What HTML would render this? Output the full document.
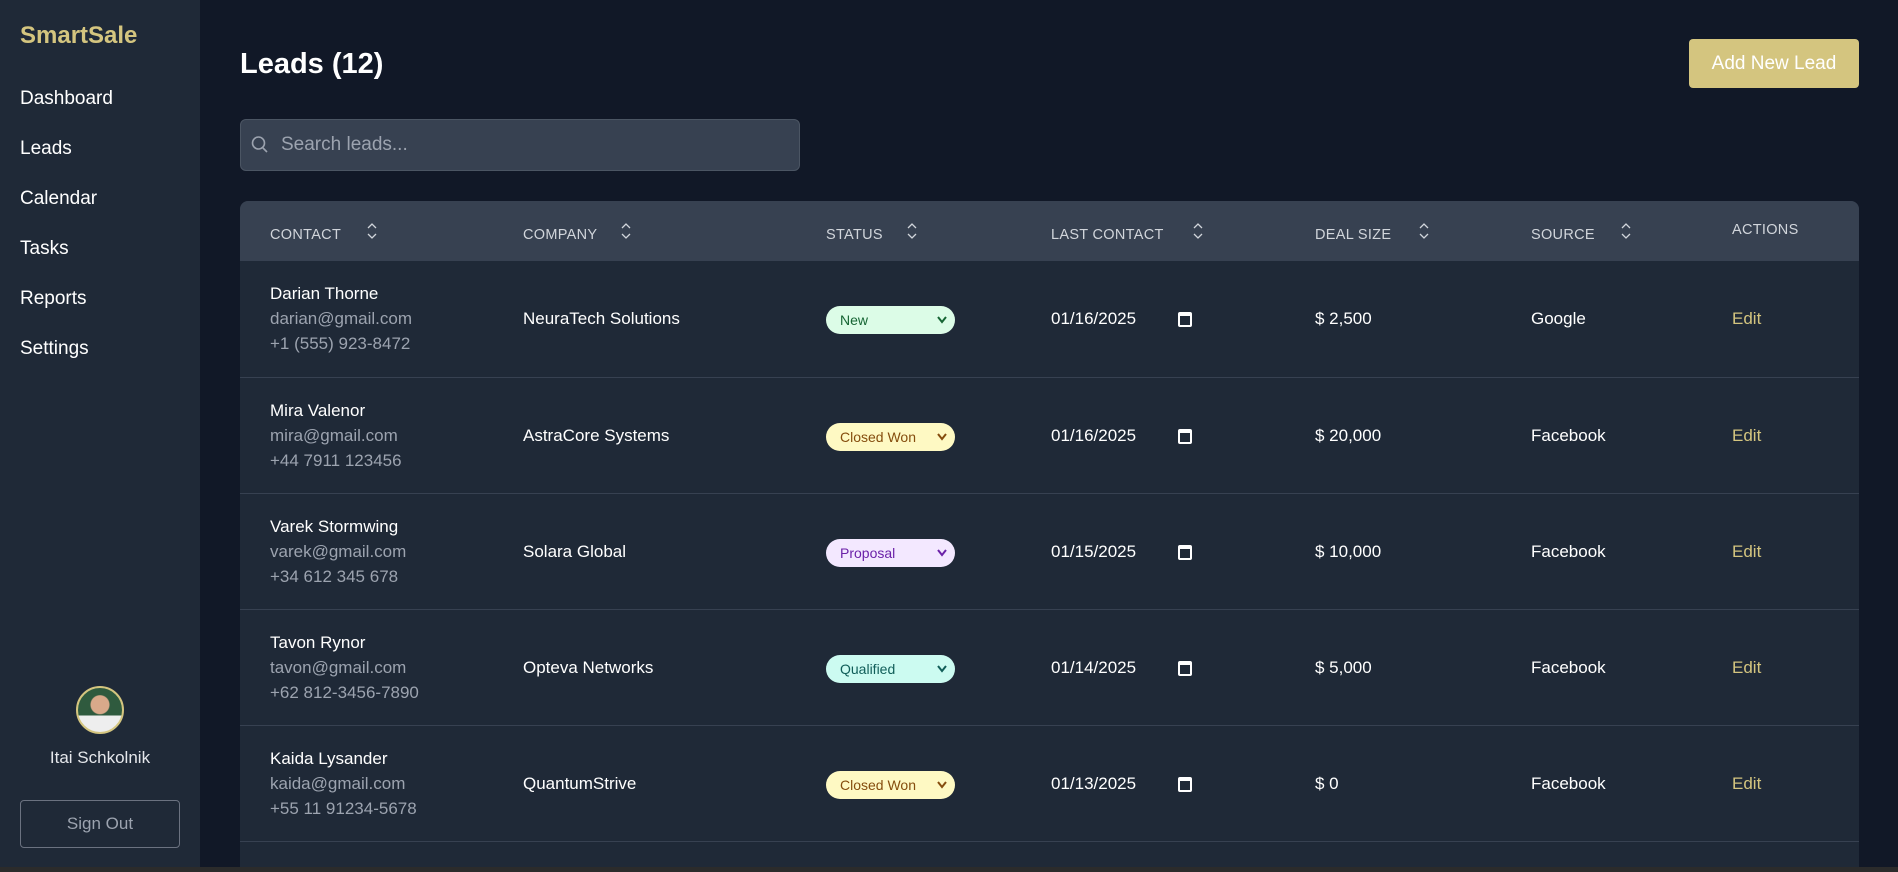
<!DOCTYPE html>
<html><head><meta charset="utf-8"><style>
*{box-sizing:border-box;margin:0;padding:0}
html,body{width:1898px;height:872px;overflow:hidden;background:#111827;font-family:"Liberation Sans",Arial,sans-serif;color:#fff}
.side{position:absolute;left:0;top:0;width:200px;height:872px;background:#1f2937}
.logo{position:absolute;left:20px;top:22px;font-size:24px;font-weight:bold;color:#d4c57f}
.nav{position:absolute;left:20px;font-size:19px;color:#fff}
.av{position:absolute;left:76px;top:686px;width:48px;height:48px;border-radius:50%;border:2px solid #d4c57f;background:radial-gradient(circle at 50% 38%,#d9a98a 0 9px,transparent 10px),linear-gradient(#2f5a3e 0 62%,#eee 62%)}
.uname{position:absolute;left:0;width:200px;top:748px;text-align:center;font-size:17px;color:#e5e7eb}
.so{position:absolute;left:20px;top:800px;width:160px;height:48px;border:1px solid #6b7280;border-radius:4px;color:#9ca3af;font-size:17px;text-align:center;line-height:46px}
h1{position:absolute;left:240px;top:48px;font-size:29px;font-weight:bold}
.add{position:absolute;left:1689px;top:39px;width:170px;height:49px;background:#d4c57f;border-radius:4px;font-size:19px;text-align:center;line-height:49px;color:#fff}
.search{position:absolute;left:240px;top:119px;width:560px;height:52px;background:#374151;border:1px solid #4b5563;border-radius:6px;color:#9ca3af;font-size:19px;line-height:50px;padding-left:40px}
.search svg{position:absolute;left:10px;top:15px}
.table{position:absolute;left:240px;top:201px;width:1619px;height:666px;background:#1f2937;border-radius:8px 8px 0 0;overflow:hidden}
.th{position:absolute;left:0;top:0;width:100%;height:60px;background:#374151}
.h{position:absolute;top:26px;font-size:14.5px;color:#d1d5db;letter-spacing:.3px}
.h svg{position:absolute;top:-6px}
.row{position:absolute;left:0;width:100%;height:116px;border-top:1px solid #374151}
.c{position:absolute;font-size:17px}
.g{color:#9ca3af}
.pill{position:absolute;left:586px;top:45px;width:129px;height:28px;border-radius:14px;font-size:14px;line-height:28px;padding-left:14px}
.pill svg{position:absolute;right:8px;top:10px}
.cal{position:absolute;left:938px;top:51px;width:14px;height:15px;border:2px solid #fff;border-top-width:4px;border-radius:2px}
.edit{color:#d4c57f}
.bar{position:absolute;left:0;top:867px;width:1898px;height:5px;background:#2b2b2b}
</style></head><body>
<div class="side">
<div class="logo">SmartSale</div>
<div class="nav" style="top:88px">Dashboard</div>
<div class="nav" style="top:138px">Leads</div>
<div class="nav" style="top:188px">Calendar</div>
<div class="nav" style="top:238px">Tasks</div>
<div class="nav" style="top:288px">Reports</div>
<div class="nav" style="top:338px">Settings</div>
<div class="av"></div>
<div class="uname">Itai Schkolnik</div>
<div class="so">Sign Out</div>
</div>
<h1>Leads (12)</h1>
<div class="add">Add New Lead</div>
<div class="search"><svg width="18" height="20" viewBox="0 0 18 20"><circle cx="7.5" cy="8" r="6" fill="none" stroke="#9ca3af" stroke-width="1.6"/><path d="M12 13l4 4" stroke="#9ca3af" stroke-width="1.6"/></svg>Search leads...</div>
<div class="table">
<div class="th">
<div class="h" style="left:30px">CONTACT<svg style="left:96px" width="12" height="20" viewBox="0 0 12 20"><path d="M2 7l4-4 4 4M2 13l4 4 4-4" fill="none" stroke="#d1d5db" stroke-width="1.3"/></svg></div>
<div class="h" style="left:283px">COMPANY<svg style="left:97px" width="12" height="20" viewBox="0 0 12 20"><path d="M2 7l4-4 4 4M2 13l4 4 4-4" fill="none" stroke="#d1d5db" stroke-width="1.3"/></svg></div>
<div class="h" style="left:586px">STATUS<svg style="left:80px" width="12" height="20" viewBox="0 0 12 20"><path d="M2 7l4-4 4 4M2 13l4 4 4-4" fill="none" stroke="#d1d5db" stroke-width="1.3"/></svg></div>
<div class="h" style="left:811px">LAST CONTACT<svg style="left:141px" width="12" height="20" viewBox="0 0 12 20"><path d="M2 7l4-4 4 4M2 13l4 4 4-4" fill="none" stroke="#d1d5db" stroke-width="1.3"/></svg></div>
<div class="h" style="left:1075px">DEAL SIZE<svg style="left:103px" width="12" height="20" viewBox="0 0 12 20"><path d="M2 7l4-4 4 4M2 13l4 4 4-4" fill="none" stroke="#d1d5db" stroke-width="1.3"/></svg></div>
<div class="h" style="left:1291px">SOURCE<svg style="left:89px" width="12" height="20" viewBox="0 0 12 20"><path d="M2 7l4-4 4 4M2 13l4 4 4-4" fill="none" stroke="#d1d5db" stroke-width="1.3"/></svg></div>
<div class="h" style="left:1492px;top:21px">ACTIONS</div>
</div>

<div class="row" style="top:60px;border-top:0">
<div class="c" style="left:30px;top:23px">Darian Thorne</div>
<div class="c g" style="left:30px;top:48px">darian@gmail.com</div>
<div class="c g" style="left:30px;top:73px">+1 (555) 923-8472</div>
<div class="c" style="left:283px;top:48px">NeuraTech Solutions</div>
<div class="pill" style="background:#dcfce7;color:#166534">New<svg width="10" height="8" viewBox="0 0 10 8"><path d="M1 1l4 5 4-5" fill="none" stroke="#166534" stroke-width="2"/></svg></div>
<div class="c" style="left:811px;top:48px">01/16/2025</div><div class="cal"></div>
<div class="c" style="left:1075px;top:48px">$ 2,500</div>
<div class="c" style="left:1291px;top:48px">Google</div>
<div class="c edit" style="left:1492px;top:48px">Edit</div>
</div>

<div class="row" style="top:176px">
<div class="c" style="left:30px;top:23px">Mira Valenor</div>
<div class="c g" style="left:30px;top:48px">mira@gmail.com</div>
<div class="c g" style="left:30px;top:73px">+44 7911 123456</div>
<div class="c" style="left:283px;top:48px">AstraCore Systems</div>
<div class="pill" style="background:#fef9c3;color:#854d0e">Closed Won<svg width="10" height="8" viewBox="0 0 10 8"><path d="M1 1l4 5 4-5" fill="none" stroke="#854d0e" stroke-width="2"/></svg></div>
<div class="c" style="left:811px;top:48px">01/16/2025</div><div class="cal"></div>
<div class="c" style="left:1075px;top:48px">$ 20,000</div>
<div class="c" style="left:1291px;top:48px">Facebook</div>
<div class="c edit" style="left:1492px;top:48px">Edit</div>
</div>

<div class="row" style="top:292px">
<div class="c" style="left:30px;top:23px">Varek Stormwing</div>
<div class="c g" style="left:30px;top:48px">varek@gmail.com</div>
<div class="c g" style="left:30px;top:73px">+34 612 345 678</div>
<div class="c" style="left:283px;top:48px">Solara Global</div>
<div class="pill" style="background:#f3e8ff;color:#6b21a8">Proposal<svg width="10" height="8" viewBox="0 0 10 8"><path d="M1 1l4 5 4-5" fill="none" stroke="#6b21a8" stroke-width="2"/></svg></div>
<div class="c" style="left:811px;top:48px">01/15/2025</div><div class="cal"></div>
<div class="c" style="left:1075px;top:48px">$ 10,000</div>
<div class="c" style="left:1291px;top:48px">Facebook</div>
<div class="c edit" style="left:1492px;top:48px">Edit</div>
</div>

<div class="row" style="top:408px">
<div class="c" style="left:30px;top:23px">Tavon Rynor</div>
<div class="c g" style="left:30px;top:48px">tavon@gmail.com</div>
<div class="c g" style="left:30px;top:73px">+62 812-3456-7890</div>
<div class="c" style="left:283px;top:48px">Opteva Networks</div>
<div class="pill" style="background:#ccfbf1;color:#115e59">Qualified<svg width="10" height="8" viewBox="0 0 10 8"><path d="M1 1l4 5 4-5" fill="none" stroke="#115e59" stroke-width="2"/></svg></div>
<div class="c" style="left:811px;top:48px">01/14/2025</div><div class="cal"></div>
<div class="c" style="left:1075px;top:48px">$ 5,000</div>
<div class="c" style="left:1291px;top:48px">Facebook</div>
<div class="c edit" style="left:1492px;top:48px">Edit</div>
</div>

<div class="row" style="top:524px">
<div class="c" style="left:30px;top:23px">Kaida Lysander</div>
<div class="c g" style="left:30px;top:48px">kaida@gmail.com</div>
<div class="c g" style="left:30px;top:73px">+55 11 91234-5678</div>
<div class="c" style="left:283px;top:48px">QuantumStrive</div>
<div class="pill" style="background:#fef9c3;color:#854d0e">Closed Won<svg width="10" height="8" viewBox="0 0 10 8"><path d="M1 1l4 5 4-5" fill="none" stroke="#854d0e" stroke-width="2"/></svg></div>
<div class="c" style="left:811px;top:48px">01/13/2025</div><div class="cal"></div>
<div class="c" style="left:1075px;top:48px">$ 0</div>
<div class="c" style="left:1291px;top:48px">Facebook</div>
<div class="c edit" style="left:1492px;top:48px">Edit</div>
</div>

<div class="row" style="top:640px">
<div class="c" style="left:30px;top:23px">Ilana Shamrock</div>
</div>
</div>
<div class="bar"></div>
</body></html>
